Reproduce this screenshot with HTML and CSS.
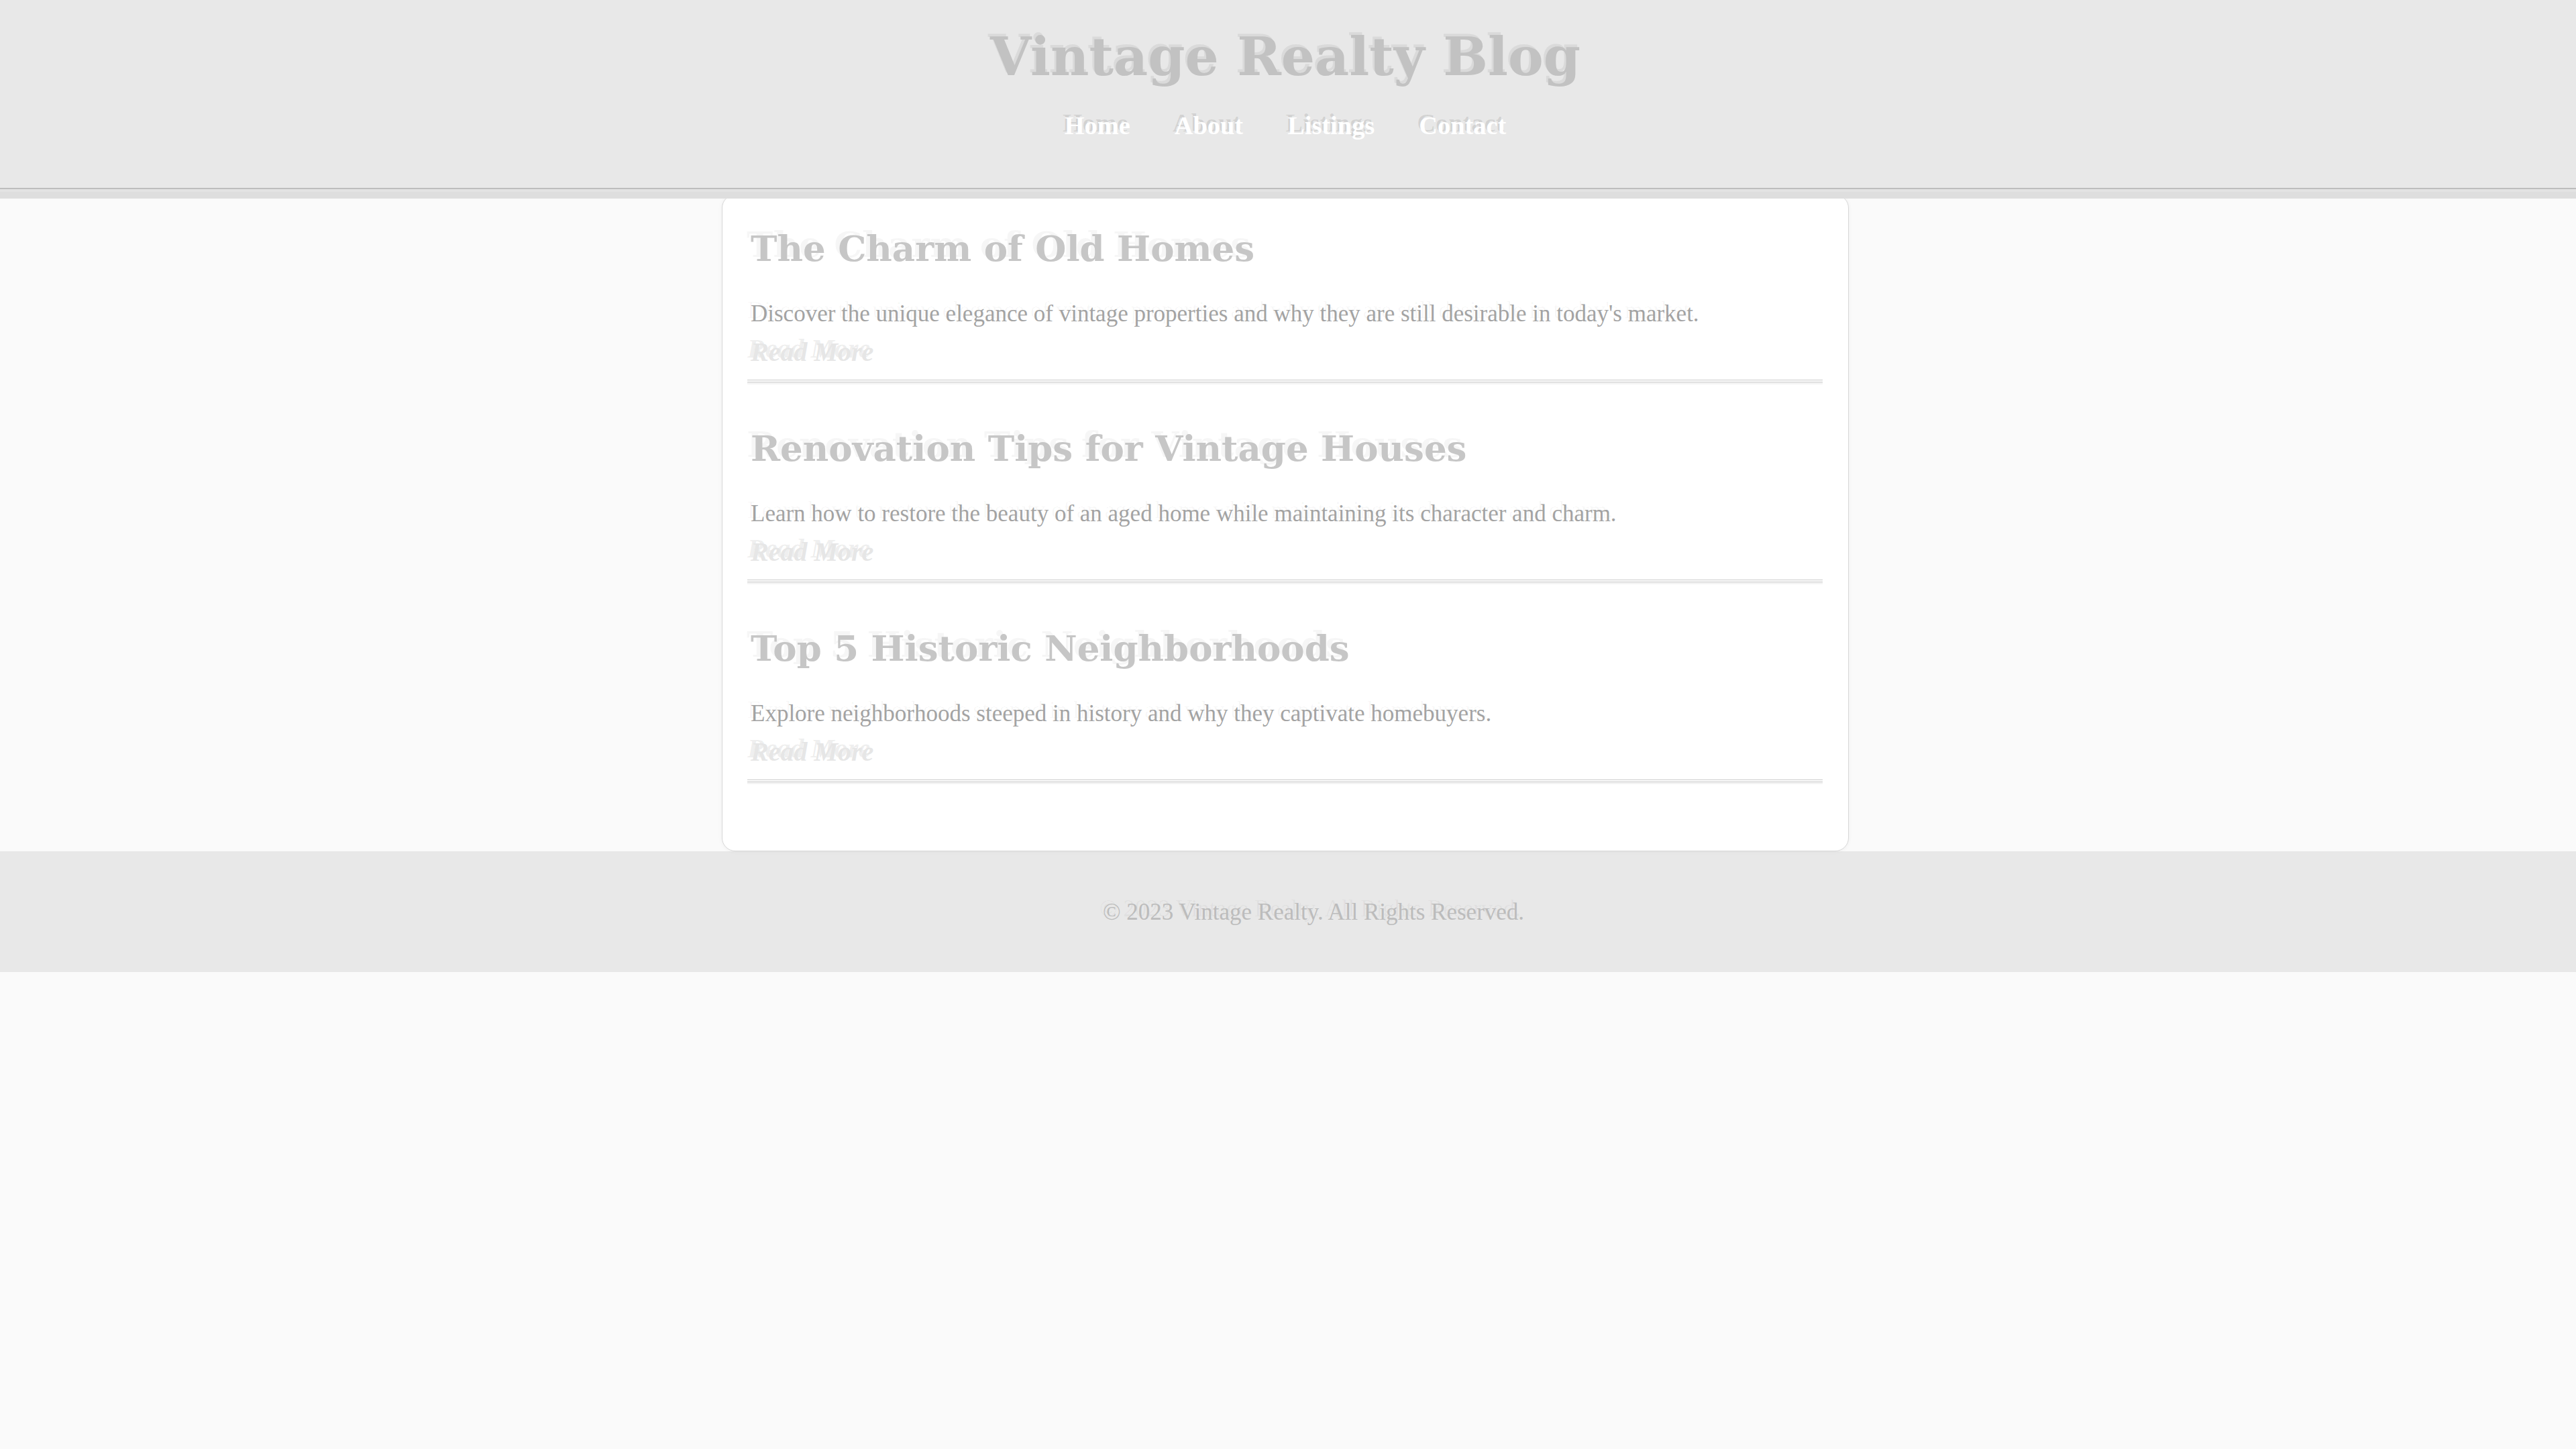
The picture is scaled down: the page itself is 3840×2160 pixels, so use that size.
FILE: index.html
```html
<!DOCTYPE html>
<html lang="en">
<head>
<meta charset="utf-8">
<title>Vintage Realty Blog</title>
<link rel="stylesheet" href="styles.css">
</head>
<body>
<header class="site-header">
  <h1 class="site-title">Vintage Realty Blog</h1>
  <nav class="site-nav">
    <a href="#">Home</a>
    <a href="#">About</a>
    <a href="#">Listings</a>
    <a href="#">Contact</a>
  </nav>
</header>
<main class="page">
  <div class="posts">
    <article class="post">
      <h2 class="post-title">The Charm of Old Homes</h2>
      <p class="post-excerpt">Discover the unique elegance of vintage properties and why they are still desirable in today's market.</p>
      <a class="read-more" href="#">Read More</a>
    </article>
    <article class="post">
      <h2 class="post-title">Renovation Tips for Vintage Houses</h2>
      <p class="post-excerpt">Learn how to restore the beauty of an aged home while maintaining its character and charm.</p>
      <a class="read-more" href="#">Read More</a>
    </article>
    <article class="post">
      <h2 class="post-title">Top 5 Historic Neighborhoods</h2>
      <p class="post-excerpt">Explore neighborhoods steeped in history and why they captivate homebuyers.</p>
      <a class="read-more" href="#">Read More</a>
    </article>
  </div>
</main>
<footer class="site-footer">
  <p>&copy; 2023 Vintage Realty. All Rights Reserved.</p>
</footer>
</body>
</html>
```
FILE: styles.css
```css
html, body {
  background: #fafafa;
}
body {
  margin: 0;
}

.site-header {
  position: relative;
  z-index: 2;
  background: #e8e8e8;
  border-bottom: 2px solid #bdbdbd;
  box-shadow: 0 4px 0 #e3e3e3, 0 14px 0 #dedede;
  padding: 35px 8px 68px 0;
  text-align: center;
}
.site-title {
  margin: 0;
  font: bold 79px/100px "DejaVu Serif", serif;
  color: #c2c2c2;
  text-shadow: -3px -4px 0 rgba(0, 0, 0, 0.06);
}
.site-nav {
  margin-top: 27px;
  display: flex;
  justify-content: center;
  gap: 66px;
}
.site-nav a {
  font: bold 38.4px/50px "Liberation Serif", serif;
  color: #ffffff;
  text-decoration: none;
  text-shadow: -3px -4px 0 rgba(0, 0, 0, 0.09);
}

.page {
  padding-right: 8px;
}
.posts {
  position: relative;
  z-index: 1;
  box-sizing: border-box;
  width: 1680px;
  margin: 8px auto 0;
  padding: 0 38px 83px 37px;
  background: #ffffff;
  border: 1px solid #d8d8d8;
  border-radius: 20px;
  box-shadow: 0 0 6px rgba(0, 0, 0, 0.05);
}
.post {
  padding: 44px 0 16.5px 5px;
  margin-bottom: 19px;
  border-bottom: 4px double #c9c9c9;
  box-shadow: 0 3px 0 #f3f3f3;
}
.post-title {
  margin: 0;
  font: bold 53px/70px "DejaVu Serif", serif;
  color: #c6c6c6;
  text-shadow: -6px -6px 0 rgba(0, 0, 0, 0.035);
}
.post-excerpt {
  margin: 37.5px 0 0;
  font: 35px/50px "Liberation Serif", serif;
  color: #a3a3a3;
  text-shadow: -5px -5px 0 rgba(0, 0, 0, 0.03);
}
.read-more {
  display: block;
  margin-top: 7px;
  font: italic bold 40px/50px "Liberation Serif", serif;
  color: #e6e6e6;
  text-decoration: none;
  text-shadow: -5px -5px 0 rgba(0, 0, 0, 0.08);
}

.site-footer {
  background: #e8e8e8;
  padding: 66px 0 64px 76px;
  text-align: center;
}
.site-footer p {
  margin: 0;
  font: 35px/50px "Liberation Serif", serif;
  color: #bcbcbc;
  text-shadow: -5px -5px 0 rgba(0, 0, 0, 0.04);
}
```
